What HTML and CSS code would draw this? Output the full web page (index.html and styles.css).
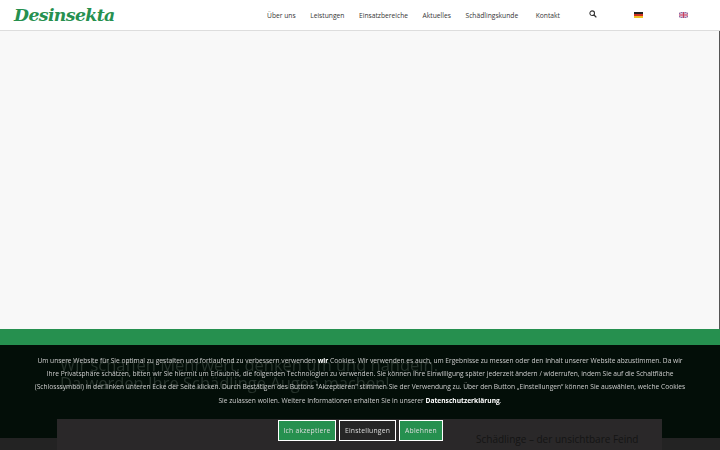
FILE: index.html
```html
<!DOCTYPE html>
<html lang="de">
<head>
  <meta charset="UTF-8"/>
  <title>Desinsekta</title>
  <link rel="stylesheet" href="styles.css">
</head>
<body>

  <header class="site-header">
    <a class="logo" href="#">Desinsekta</a>
    <nav class="main-nav">
      <a href="#">Über uns</a>
      <a href="#">Leistungen</a>
      <a href="#">Einsatzbereiche</a>
      <a href="#">Aktuelles</a>
      <a href="#">Schädlingskunde</a>
      <a class="nav-contact" href="#">Kontakt</a>
    </nav>
    <svg class="search-icon" viewBox="0 0 10 10" width="8" height="8">
      <circle cx="4" cy="4" r="2.9" fill="none" stroke="#333" stroke-width="1.3"/>
      <path d="M6 6 L9.2 9.2" stroke="#333" stroke-width="1.7"/>
    </svg>
    <svg class="flag flag-de" viewBox="0 0 9 6" width="9" height="6">
      <rect width="9" height="2" y="0" fill="#222"/>
      <rect width="9" height="2" y="2" fill="#d03020"/>
      <rect width="9" height="2" y="4" fill="#f0c020"/>
    </svg>
    <svg class="flag flag-en" viewBox="0 0 9 6" width="9" height="6">
      <rect width="9" height="6" fill="#7a6aa6"/>
      <path d="M0 0 L9 6 M9 0 L0 6" stroke="#e8c8d8" stroke-width="1.2"/>
      <path d="M4.5 0 V6 M0 3 H9" stroke="#e8c8d8" stroke-width="2"/>
      <path d="M4.5 0 V6 M0 3 H9" stroke="#c84060" stroke-width="1"/>
    </svg>
  </header>

  <section class="hero"></section>

  <section class="intro">
    <h2>Wir schaffen Mehrwert, denken um und handeln.</h2>
    <h2>Da werden Ihre Schädlinge Augen machen!</h2>
  </section>

  <section class="panel-wrap">
    <div class="panel">
      <h3>Schädlinge – der unsichtbare Feind</h3>
    </div>
  </section>

  <!-- cookie banner lies over the page -->
  <div class="cookie-backdrop"></div>
  <div class="cookie-banner">
    <p>
      Um unsere Website für Sie optimal zu gestalten und fortlaufend zu verbessern verwenden <b>wir</b> Cookies. Wir verwenden es auch, um Ergebnisse zu messen oder den Inhalt unserer Website abzustimmen. Da wir<br>
      Ihre Privatsphäre schätzen, bitten wir Sie hiermit um Erlaubnis, die folgenden Technologien zu verwenden. Sie können Ihre Einwilligung später jederzeit ändern / widerrufen, indem Sie auf die Schaltfläche<br>
      (Schlosssymbol) in der linken unteren Ecke der Seite klicken. Durch Bestätigen des Buttons "Akzeptieren" stimmen Sie der Verwendung zu. Über den Button „Einstellungen“ können Sie auswählen, welche Cookies<br>
      Sie zulassen wollen. Weitere Informationen erhalten Sie in unserer <a href="#">Datenschutzerklärung</a>.
    </p>
    <div class="cookie-buttons">
      <button class="btn-green btn-accept">Ich akzeptiere</button>
      <button class="btn-dark btn-settings">Einstellungen</button>
      <button class="btn-green btn-decline">Ablehnen</button>
    </div>
  </div>

</body>
</html>
```

FILE: styles.css
```css
html, body {
  height: 100%;
}

body {
  margin: 0;
  height: 450px;
  overflow: hidden;
  font-family: "Open Sans", sans-serif;
  background-color: #232323;
}

.site-header {
  display: flex;
  align-items: center;
  height: 30px;
  background: #fff;
  border-bottom: 1px solid #ddd;
}

.logo {
  margin-left: 14px;
  width: 253px;
  font-family: "DejaVu Serif", serif;
  font-size: 17.3px;
  font-weight: bold;
  font-style: italic;
  letter-spacing: -0.6px;
  color: #26904f;
  text-decoration: none;
}

.main-nav {
  display: flex;
  gap: 14.6px;
  opacity: 0.99;
}

.main-nav a {
  font-size: 6.7px;
  font-weight: 400;
  color: #333;
  text-decoration: none;
}

.main-nav .nav-contact {
  margin-left: 3px;
}

.search-icon {
  margin-left: 29px;
  margin-top: -2px;
}

.flag {
  margin-top: -1px;
}

.flag-de {
  margin-left: 37px;
}

.flag-en {
  margin-left: 36px;
}

.hero {
  height: 298px;
  background: #f8f8f8;
  border-right: 1px solid #555;
}

.intro {
  height: 109px;
  padding: 27px 0 0 60px;
  box-sizing: border-box;
  background: #26904f;
}

.intro h2 {
  position: relative;
  z-index: 2;
  margin: 0;
  font-size: 16.5px;
  line-height: 18px;
  font-weight: 400;
  color: #27332c;
}

.panel-wrap {
  display: flex;
  height: 12px;
  background: #232323;
  position: relative;
  z-index: 2;
}

.panel {
  flex: 1;
  margin: -19px 58px 0 57px;
  height: 31px;
  background: #2a2829;
}

.panel h3 {
  margin: 0;
  padding: 14px 0 0 419px;
  font-size: 10px;
  line-height: 13px;
  font-weight: 400;
  color: #141414;
}

.cookie-backdrop {
  position: fixed;
  left: 0;
  right: 0;
  top: 345px;
  bottom: 0;
  background: rgba(0, 0, 0, 0.9);
  z-index: 1;
}

.cookie-banner {
  position: fixed;
  left: 0;
  right: 0;
  top: 345px;
  bottom: 0;
  padding-top: 9px;
  text-align: center;
  z-index: 3;
}

.cookie-banner p {
  margin: 0;
  font-size: 6.65px;
  line-height: 13.2px;
  color: #ccc;
}

.cookie-banner a {
  color: #fff;
  font-weight: 700;
  text-decoration: none;
}

.cookie-banner b {
  color: #fff;
}

.cookie-buttons {
  display: flex;
  justify-content: center;
  gap: 3px;
  margin-top: 13px;
  padding-left: 1px;
}

.cookie-buttons button {
  height: 21px;
  padding: 0;
  border: 1px solid #fff;
  font-family: "Open Sans", sans-serif;
  font-size: 6.8px;
  letter-spacing: 0.2px;
  color: #ddd;
}

.btn-green {
  background: #26904f;
}

.btn-dark {
  background: #262626;
}

.btn-accept {
  width: 58px;
}

.btn-settings {
  width: 57px;
}

.btn-decline {
  width: 44px;
}
```
